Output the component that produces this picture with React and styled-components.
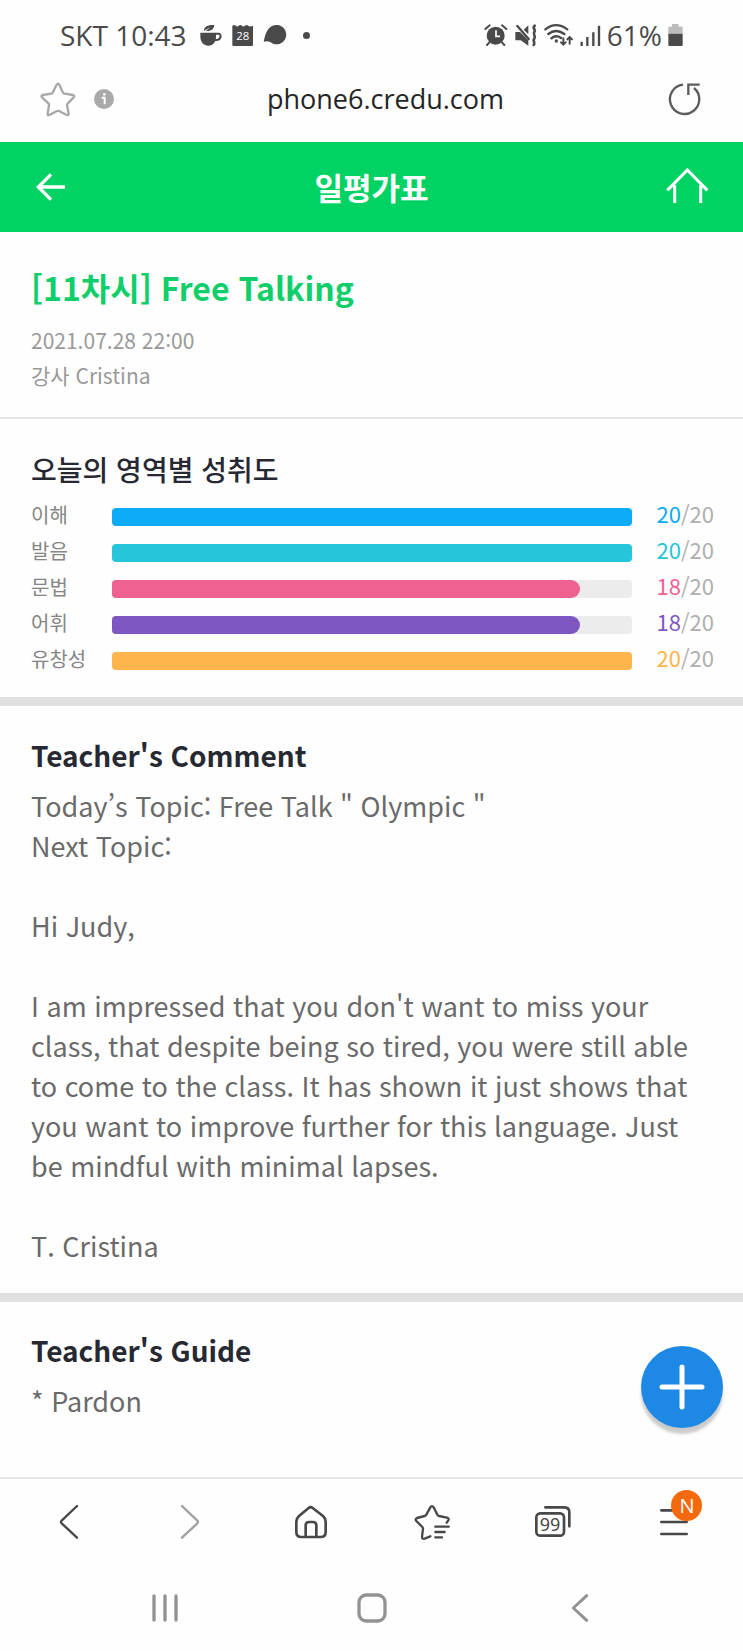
import React from "react";
import styled, { createGlobalStyle } from "styled-components";

const GlobalStyle = createGlobalStyle`
  * {
    box-sizing: border-box;
  }
  body {
    margin: 0;
    background: #fefefe;
    font-family: "Noto Sans CJK KR", "Noto Sans", sans-serif;
  }
  h1, h2, p, ul {
    margin: 0;
    padding: 0;
  }
  button {
    border: 0;
    padding: 0;
    background: none;
    font: inherit;
    color: inherit;
    cursor: pointer;
  }
  svg {
    display: block;
    flex: none;
  }
`;

const Page = styled.div`
  min-height: 100vh;
  display: flex;
  flex-direction: column;
`;

//phone status bar
const StatusBar = styled.div`
  height: 70px;
  padding: 0 60px;
  display: flex;
  justify-content: space-between;
  align-items: center;
  color: #4a4a4a;
  font-family: "Open Sans", "Noto Sans", sans-serif;
  font-size: 28px;
  font-weight: 400;
`;

const StatusGroup = styled.div`
  display: flex;
  align-items: center;
  gap: ${(props) => props.$gap}px;
`;

const Clock = styled.span`
  margin-right: 4px;
`;

const Dot = styled.span`
  width: 7px;
  height: 7px;
  margin-left: 8px;
  border-radius: 50%;
  background: #4a4a4a;
`;

//browser address bar
const AddressBar = styled.div`
  height: 72px;
  padding: 0 40px 14px;
  display: grid;
  grid-template-columns: 100px 1fr 100px;
  align-items: center;
`;

const AddressIcons = styled.div`
  display: flex;
  align-items: center;
  gap: 18px;
`;

const Address = styled.p`
  padding-left: 28px;
  text-align: center;
  font-family: "Open Sans", "Noto Sans", sans-serif;
  font-size: 27px;
  line-height: 36px;
  color: #252525;
`;

const ReloadButton = styled.button`
  justify-self: end;
`;

//green app header
const Header = styled.header`
  height: 90px;
  padding: 0 33px;
  display: grid;
  grid-template-columns: 1fr auto 1fr;
  align-items: center;
  background: #00d264;
  color: #fff;
`;

const HeaderTitle = styled.h1`
  font-size: 31px;
  font-weight: 700;
  line-height: 44px;
`;

const HeaderButton = styled.button`
  justify-self: ${(props) => props.$side};
`;

const Main = styled.main`
  flex: 1;
  position: relative;
`;

const LessonInfo = styled.section`
  padding: 31px 31px 24px;
  border-bottom: 2px solid #e4e4e4;
`;

const LessonTitle = styled.h2`
  margin-bottom: 12px;
  font-size: 32px;
  font-weight: 700;
  line-height: 48px;
  color: #10cf6b;
`;

const LessonMeta = styled.p`
  font-size: 21px;
  line-height: 35px;
  color: #999;
`;

const Section = styled.section`
  padding: ${(props) => props.$pad};
  border-bottom: ${(props) => (props.$last ? "0" : "9px solid #e0e0e0")};
`;

const SectionTitle = styled.h2`
  font-size: 28px;
  font-weight: ${(props) => props.$weight || 700};
  line-height: 40px;
  color: #272932;
`;

const ScoreList = styled.ul`
  margin-top: 8px;
  list-style: none;
`;

const ScoreRow = styled.li`
  height: 36px;
  display: grid;
  grid-template-columns: 81px 1fr 82px;
  align-items: center;
`;

const ScoreLabel = styled.span`
  font-size: 20px;
  line-height: 32px;
  color: #858585;
`;

const Track = styled.div`
  height: 18px;
  margin-top: 4px;
  border-radius: 4px;
  background: #ececec;
  overflow: hidden;
`;

const Fill = styled.div`
  height: 100%;
  border-radius: 0 9px 9px 0;
  background: ${(props) => props.$color};
`;

const FullFill = styled(Fill)`
  border-radius: 0;
`;

const ScoreValue = styled.span`
  padding-bottom: 4px;
  text-align: right;
  font-size: 22px;
  line-height: 32px;
  color: #b0b0b0;
`;

const Earned = styled.span`
  color: ${(props) => props.$color};
`;

const BodyText = styled.p`
  margin-top: 11px;
  font-size: 27px;
  line-height: 40px;
  color: #6a6a6a;
  white-space: pre-line;
`;

const AddButton = styled.button`
  position: absolute;
  right: 20px;
  bottom: 49px;
  width: 82px;
  height: 82px;
  border-radius: 50%;
  display: flex;
  align-items: center;
  justify-content: center;
  background: #1e88e5;
  box-shadow: 0 6px 3px rgba(0, 0, 0, 0.2);
`;

//browser tools at the bottom
const Toolbar = styled.nav`
  height: 88px;
  padding: 0 8px;
  display: grid;
  grid-template-columns: repeat(6, 1fr);
  align-items: center;
  border-top: 2px solid #e8e8e8;
  color: #484848;
`;

const ToolButton = styled.button`
  height: 56px;
  display: flex;
  align-items: center;
  justify-content: center;
  color: ${(props) => (props.$dim ? "#a0a0a0" : "inherit")};
`;

const MenuWrap = styled.span`
  position: relative;
`;

const Badge = styled.span`
  position: absolute;
  left: 11px;
  top: -18px;
  width: 31px;
  height: 31px;
  border-radius: 50%;
  background: #f4690c;
  color: #fff;
  font-family: "Open Sans", sans-serif;
  font-size: 20px;
  line-height: 31px;
  text-align: center;
`;

const SystemNav = styled.nav`
  height: 86px;
  padding: 0 61px;
  display: grid;
  grid-template-columns: repeat(3, 1fr);
  align-items: center;
  color: #929292;
`;

const scores = [
  { name: "이해", value: 20, color: "#0eabf6" },
  { name: "발음", value: 20, color: "#27c5da" },
  { name: "문법", value: 18, color: "#ef6191" },
  { name: "어휘", value: 18, color: "#7e57c2" },
  { name: "유창성", value: 20, color: "#ffb54d" },
];

const comment = `Today’s Topic: Free Talk " Olympic "
Next Topic:

Hi Judy,

I am impressed that you don't want to miss your class, that despite being so tired, you were still able to come to the class. It has shown it just shows that you want to improve further for this language. Just be mindful with minimal lapses.

T. Cristina`;

const line = {
  fill: "none",
  stroke: "currentColor",
  strokeLinecap: "round",
  strokeLinejoin: "round",
};

const CupIcon = () => (
  <svg width="24" height="24" viewBox="0 0 72 72" fill="currentColor">
    <path d="M15 24C15 12 24 5 46 6c-1 12-9 19-25 18 4-5 9-8 14-10-8 1-14 5-20 10Z" />
    <path d="M4 29h47v12c0 15-9 27-23 27S4 56 4 41Z" />
    <path d="M50 32h9c8 0 8 16-2 18l-10 2" fill="none" stroke="currentColor" strokeWidth="6" />
  </svg>
);

const CalendarIcon = () => (
  <svg width="24" height="24" viewBox="0 0 72 72" fill="currentColor">
    <path d="M4 8c4-3 8-3 10 0s7 3 9 0 8-3 10 0 7 3 9 0 8-3 10 0 7 3 14 0v57q0 4-4 4H8q-4 0-4-4Z" />
    <text x="35" y="51" fill="#fff" fontSize="34" fontWeight="400" textAnchor="middle">28</text>
  </svg>
);

const BubbleIcon = () => (
  <svg width="24" height="24" viewBox="0 0 72 72" fill="currentColor">
    <path d="M2 56C8 28 16 6 42 6a29 29 0 1 1-19 52Q14 52 2 56Z" />
  </svg>
);

const AlarmIcon = () => (
  <svg width="24" height="24" viewBox="0 0 72 72">
    <circle cx="35" cy="38" r="27" fill="currentColor" />
    <path d="M4 18 17 7M54 7l13 11M16 58l-7 8M54 58l7 8" {...line} strokeWidth="6" />
    <path d="M36 22v18h12" fill="none" stroke="#fff" strokeWidth="5" />
  </svg>
);

const MuteIcon = () => (
  <svg width="24" height="24" viewBox="0 0 72 72">
    <path d="M4 27h14l25 25v16L20 52H4ZM43 7v27L29 20Z" fill="currentColor" />
    <path d="M10 9 44 48" {...line} strokeWidth="7" />
    <path d="M62 8c-9 8 5 11-1 19s6 11 0 19 4 12-2 20" {...line} strokeWidth="8" />
  </svg>
);

const WifiIcon = () => (
  <svg width="30" height="24" viewBox="0 0 90 72">
    <path d="M4 19Q36-6 70 19M13 33q23-18 48 0M22 46q14-12 29-1" {...line} strokeWidth="7" />
    <circle cx="37" cy="54" r="5" fill="currentColor" />
    <path d="M58 46v19M51 58l7 7 7-7M77 62V42M70 49l7-7 7 7" {...line} strokeWidth="6" />
  </svg>
);

const SignalIcon = () => (
  <svg width="21" height="24" viewBox="0 0 63 72">
    <path d="M5 56v13M22 42v27M40 28v41M57 8v61" fill="none" stroke="currentColor" strokeWidth="7" />
  </svg>
);

const BatteryIcon = () => (
  <svg width="15" height="24" viewBox="0 0 45 72">
    <path d="M1 32V11h11V3h20v8h12v21Z" fill="#bcbcbc" />
    <path d="M1 32h43v34q0 3-3 3H4q-3 0-3-3Z" fill="currentColor" />
  </svg>
);

const StarIcon = () => (
  <svg width="36" height="36" viewBox="0 0 108 108">
    <path d="M50 11q4-6 8 0l11 24q1 3 4 3l26 4q6 2 2 7L83 68q-2 2-2 5l5 25q0 6-6 4L57 90q-3-1-6 0l-23 12q-6 2-5-4l4-25q1-3-1-5L6 49q-4-5 2-7l26-4q3 0 4-3Z" {...line} stroke="#a8a8a8" strokeWidth="7" />
  </svg>
);

const InfoIcon = () => (
  <svg width="20" height="20" viewBox="0 0 60 60">
    <circle cx="30" cy="30" r="30" fill="#a9a9a9" />
    <circle cx="31" cy="16" r="4" fill="#fff" />
    <path d="M23 26h9v20" fill="none" stroke="#fff" strokeWidth="6" />
  </svg>
);

const ReloadIcon = () => (
  <svg width="36" height="36" viewBox="0 0 108 108">
    <path d="M48 11A44 44 0 1 0 81 21M98 11H64v31" fill="none" stroke="#5c5c5c" strokeWidth="7" />
  </svg>
);

const BackArrowIcon = () => (
  <svg width="36" height="36" viewBox="0 0 108 108">
    <path d="M54 16 16 54l38 38M17 54h79" fill="none" stroke="currentColor" strokeWidth="10" />
  </svg>
);

const HeaderHomeIcon = () => (
  <svg width="44" height="44" viewBox="0 0 132 132">
    <path d="M4 76 64 15l60 61M26 61v53M104 61v53" fill="none" stroke="currentColor" strokeWidth="9" />
  </svg>
);

const ChevronIcon = ({ flip }) => (
  <svg width="36" height="36" viewBox="0 0 108 108">
    <path d={flip ? "M30 6 76 50q4 4 0 8L30 101" : "M78 6 32 50q-4 4 0 8l46 43"} {...line} strokeWidth="7" />
  </svg>
);

const HomeIcon = () => (
  <svg width="36" height="36" viewBox="0 0 108 108">
    <path d="M47 12q6-5 12 0l31 24q8 7 8 17v31q0 15-15 15H25Q10 99 10 84V53q0-10 8-17ZM38 98V64q0-10 10-10h12q10 0 10 10v34" {...line} strokeWidth="8" />
  </svg>
);

const BookmarksIcon = () => (
  <svg width="36" height="36" viewBox="0 0 108 108">
    <path d="M49 97 32 104q-8 2-8-5l3-25q0-3-2-5L7 51q-5-6 2-9l23-6q4-1 5-4L49 10q5-7 10 0l11 22q1 3 5 4l24 5q7 3 4 8l-5 7M64 68h40M64 84h28M64 100h20" {...line} strokeWidth="7" />
  </svg>
);

const TabsIcon = () => (
  <svg width="36" height="36" viewBox="0 0 108 108">
    <rect x="4" y="28" width="83" height="67" rx="12" {...line} strokeWidth="8" />
    <path d="M31 10h57q15 0 15 15v42" {...line} strokeWidth="8" />
    <text x="45" y="81" fill="currentColor" fontFamily="Noto Sans" fontSize="54" textAnchor="middle">99</text>
  </svg>
);

const MenuIcon = () => (
  <svg width="28" height="28" viewBox="0 0 84 84">
    <path d="M4 7h76M4 42h76M4 78h76" {...line} strokeWidth="8" />
  </svg>
);

const RecentsIcon = () => (
  <svg width="28" height="28" viewBox="0 0 84 84">
    <path d="M9 6v72M42 6v72M75 6v72" {...line} strokeWidth="10" />
  </svg>
);

const SquareIcon = () => (
  <svg width="30" height="30" viewBox="0 0 90 90">
    <rect x="6" y="6" width="78" height="78" rx="22" {...line} strokeWidth="10" />
  </svg>
);

const SystemBackIcon = () => (
  <svg width="28" height="28" viewBox="0 0 84 84">
    <path d="M65 5 25 42l40 37" {...line} strokeWidth="9" />
  </svg>
);

const PlusIcon = () => (
  <svg width="46" height="46" viewBox="0 0 46 46">
    <path d="M23 3v40M3 23h40" fill="none" stroke="#fff" strokeWidth="5" strokeLinecap="round" />
  </svg>
);

function Score({ name, value, color }) {
  const Bar = value === 20 ? FullFill : Fill;
  return (
    <ScoreRow>
      <ScoreLabel>{name}</ScoreLabel>
      <Track>
        <Bar $color={color} style={{ width: `${(value / 20) * 100}%` }} />
      </Track>
      <ScoreValue>
        <Earned $color={color}>{value}</Earned>/20
      </ScoreValue>
    </ScoreRow>
  );
}

export default function App() {
  return (
    <Page lang="ko">
      <GlobalStyle />
      <StatusBar>
        <StatusGroup $gap={8}>
          <Clock>SKT 10:43</Clock>
          <CupIcon />
          <CalendarIcon />
          <BubbleIcon />
          <Dot />
        </StatusGroup>
        <StatusGroup $gap={6}>
          <AlarmIcon />
          <MuteIcon />
          <WifiIcon />
          <SignalIcon />
          <span>61%</span>
          <BatteryIcon />
        </StatusGroup>
      </StatusBar>

      <AddressBar>
        <AddressIcons>
          <button aria-label="Bookmark">
            <StarIcon />
          </button>
          <button aria-label="Site info">
            <InfoIcon />
          </button>
        </AddressIcons>
        <Address>phone6.credu.com</Address>
        <ReloadButton aria-label="Reload">
          <ReloadIcon />
        </ReloadButton>
      </AddressBar>

      <Header>
        <HeaderButton $side="start" aria-label="Back">
          <BackArrowIcon />
        </HeaderButton>
        <HeaderTitle>일평가표</HeaderTitle>
        <HeaderButton $side="end" aria-label="Home">
          <HeaderHomeIcon />
        </HeaderButton>
      </Header>

      <Main>
        <LessonInfo>
          <LessonTitle>[11차시] Free Talking</LessonTitle>
          <LessonMeta>2021.07.28 22:00</LessonMeta>
          <LessonMeta>강사 Cristina</LessonMeta>
        </LessonInfo>

        <Section $pad="30px 29px 20px 31px">
          <SectionTitle $weight={500}>오늘의 영역별 성취도</SectionTitle>
          <ScoreList>
            {scores.map((item) => (
              <Score key={item.name} {...item} />
            ))}
          </ScoreList>
        </Section>

        <Section $pad="29px 31px 27px">
          <SectionTitle>Teacher's Comment</SectionTitle>
          <BodyText>{comment}</BodyText>
        </Section>

        <Section $last $pad="28px 31px 24px">
          <SectionTitle>Teacher's Guide</SectionTitle>
          <BodyText>* Pardon</BodyText>
        </Section>

        <AddButton aria-label="Add">
          <PlusIcon />
        </AddButton>
      </Main>

      <Toolbar>
        <ToolButton aria-label="Previous page">
          <ChevronIcon />
        </ToolButton>
        <ToolButton $dim aria-label="Next page">
          <ChevronIcon flip />
        </ToolButton>
        <ToolButton aria-label="Start page">
          <HomeIcon />
        </ToolButton>
        <ToolButton aria-label="Bookmarks">
          <BookmarksIcon />
        </ToolButton>
        <ToolButton aria-label="Tabs">
          <TabsIcon />
        </ToolButton>
        <ToolButton aria-label="Menu">
          <MenuWrap>
            <MenuIcon />
            <Badge>N</Badge>
          </MenuWrap>
        </ToolButton>
      </Toolbar>

      <SystemNav>
        <ToolButton aria-label="Recent apps">
          <RecentsIcon />
        </ToolButton>
        <ToolButton aria-label="Home screen">
          <SquareIcon />
        </ToolButton>
        <ToolButton aria-label="System back">
          <SystemBackIcon />
        </ToolButton>
      </SystemNav>
    </Page>
  );
}
